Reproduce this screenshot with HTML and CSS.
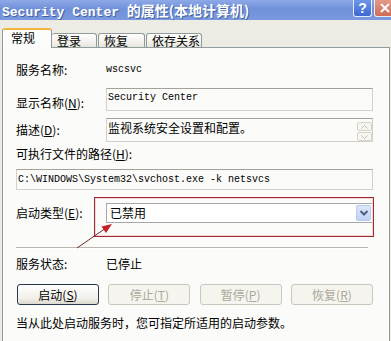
FILE: index.html
```html
<!DOCTYPE html>
<html>
  <head>
    <title>Security Center 的属性</title>
    <meta charset="utf-8">
    <link rel="stylesheet" href="styles.css">
  </head>

  <body>
    <div class="window">

      <div class="titlebar">
        <span class="title"><span class="latin">Security Center </span><span class="cjk">的属性(本地计算机)</span></span>
        <div class="tb-buttons">
          <span class="help">?</span>
          <span class="close">
            <svg width="12" height="12" viewBox="0 0 12 12"><path d="M2 2 L10 10 M10 2 L2 10" stroke="#fff" stroke-width="2"/></svg>
          </span>
        </div>
      </div>

      <div class="tabs">
        <div class="tab active">常规</div>
        <div class="tab t-logon">登录</div>
        <div class="tab t-recover">恢复</div>
        <div class="tab t-deps">依存关系</div>
      </div>

      <div class="panel">

        <div class="row r-name">
          <span class="label">服务名称:</span>
          <span class="mono">wscsvc</span>
        </div>

        <div class="row r-display">
          <span class="label">显示名称(<u>N</u>):</span>
          <div class="field mono">Security Center</div>
        </div>

        <div class="row r-desc">
          <span class="label">描述(<u>D</u>):</span>
          <div class="field area">
            <span class="area-text">监视系统安全设置和配置。</span>
            <div class="spin">
              <span><svg width="7" height="4" viewBox="0 0 7 4"><path d="M0.5 3.5 L3.5 0.5 L6.5 3.5" fill="none" stroke="#c5c3b8"/></svg></span>
              <span><svg width="7" height="4" viewBox="0 0 7 4"><path d="M0.5 0.5 L3.5 3.5 L6.5 0.5" fill="none" stroke="#c5c3b8"/></svg></span>
            </div>
          </div>
        </div>

        <div class="path-label">可执行文件的路径(<u>H</u>):</div>
        <div class="field path mono">C:\WINDOWS\System32\svchost.exe -k netsvcs</div>

        <div class="row r-startup">
          <span class="label">启动类型(<u>E</u>):</span>
          <div class="select">
            <span class="select-text">已禁用</span>
            <span class="drop">
              <svg width="10" height="8" viewBox="0 0 10 8"><path d="M1.5 2 L5 5.5 L8.5 2" fill="none" stroke="#4b5f86" stroke-width="2"/></svg>
            </span>
          </div>
          <div class="highlight"></div>
          <svg class="arrow" width="120" height="60" viewBox="0 0 120 60">
            <line x1="61" y1="51" x2="90" y2="31" stroke="#6e2a2a" stroke-width="1"/>
            <polygon points="96,27 90,36 85.5,29.4" fill="#c41f28"/>
          </svg>
        </div>

        <div class="sep"></div>

        <div class="row r-status">
          <span class="label">服务状态:</span>
          <span>已停止</span>
        </div>

        <div class="buttons">
          <button class="btn">启动(<u>S</u>)</button>
          <button class="btn" disabled>停止(<u>T</u>)</button>
          <button class="btn" disabled>暂停(<u>P</u>)</button>
          <button class="btn" disabled>恢复(<u>R</u>)</button>
        </div>

        <p class="hint">当从此处启动服务时，您可指定所适用的启动参数。</p>

      </div>
    </div>
  </body>
</html>
```

FILE: styles.css
```css
html, body {
  margin: 0;
  height: 100%;
  overflow: hidden;
}

body {
  background: #ecebe4;
  color: #000;
  font-family: "Noto Sans CJK SC", sans-serif;
  font-size: 12px;
  line-height: 16px;
}

u {
  text-decoration: underline;
}

.mono {
  font-family: "Liberation Mono", "Noto Sans CJK SC", monospace;
  font-size: 10px;
}

.window {
  width: 391px;
  height: 341px;
  display: flex;
  flex-direction: column;
  overflow: hidden;
}

/* title bar */
.titlebar {
  height: 20px;
  flex: none;
  display: flex;
  justify-content: space-between;
  background: linear-gradient(#8ea9e6, #7090da 45%, #7b99df);
}

.title {
  padding-left: 2px;
  color: #fff;
  font-weight: bold;
  white-space: nowrap;
  line-height: 20px;
  text-shadow: 1px 1px #41609f;
}

.title .latin {
  font-family: "Liberation Mono", monospace;
  font-size: 13px;
}

.title .cjk {
  font-size: 14px;
}

.tb-buttons {
  display: flex;
  gap: 2px;
  margin-right: -4px;
}

.help,
.close {
  height: 17px;
  border: 1px solid #e4ebfa;
  border-top: none;
  border-radius: 0 0 3px 3px;
  display: flex;
  align-items: center;
  justify-content: center;
  box-sizing: border-box;
}

.help {
  width: 19px;
  background: linear-gradient(#6e95ea, #3d68d2);
  color: #fff;
  font: bold 14px "Liberation Sans", sans-serif;
}

.close {
  width: 21px;
  background: linear-gradient(#e39a88, #cf6c55);
}

/* tabs */
.tabs {
  height: 19px;
  flex: none;
  margin-top: 8px;
  padding-left: 2px;
  display: flex;
  align-items: flex-end;
}

.tab {
  height: 14px;
  box-sizing: border-box;
  padding-left: 5px;
  border: 1px solid #919b9c;
  border-bottom: none;
  border-left: none;
  border-radius: 3px 3px 0 0;
  background: linear-gradient(#ffffff, #f2f1ec 60%, #e6e5de);
  line-height: 13px;
  white-space: nowrap;
}

.tab.active {
  width: 50px;
  height: 20px;
  margin-bottom: -1px;
  padding-left: 8px;
  border-left: 1px solid #919b9c;
  border-top: 2px solid #f3b53f;
  background: #fcfcfa;
  line-height: 16px;
  position: relative;
  z-index: 1;
}

.t-logon { width: 45px; }
.t-recover { width: 47px; margin-left: 1px; border-left: 1px solid #919b9c; }
.t-deps { width: 56px; margin-left: 1px; border-left: 1px solid #919b9c; }

/* panel */
.panel {
  flex: 1;
  margin: 0 1px 0 2px;
  padding: 14px 16px 0 13px;
  border: 1px solid #919b9c;
  border-bottom: none;
  background: #fbfbf9;
}

.row {
  display: flex;
  align-items: flex-start;
}

.label {
  width: 90px;
  flex: none;
  white-space: nowrap;
}

.r-name {
  height: 16px;
}

.field {
  box-sizing: border-box;
  border: 1px solid #d3d1c6;
  border-top-color: #a3a198;
  background: #fbfbf9;
}

.r-display {
  margin-top: 10px;
}

.r-display .label {
  padding-top: 7px;
}

.r-display .field {
  flex: 1;
  height: 23px;
  padding: 2px 0 0 1px;
  line-height: 14px;
}

.r-desc {
  margin-top: 7px;
}

.r-desc .label {
  padding-top: 4px;
}

.area {
  flex: 1;
  height: 24px;
  display: flex;
  padding-left: 1px;
}

.area-text {
  flex: 1;
  padding-top: 1px;
}

.spin {
  display: flex;
  flex-direction: column;
  gap: 1px;
  margin-top: 3px;
}

.spin span {
  width: 15px;
  height: 9px;
  box-sizing: border-box;
  border: 1px solid #d6d4ca;
  border-radius: 2px;
  background: #f6f5f0;
  display: flex;
  align-items: center;
  justify-content: center;
}

.path-label {
  margin-top: 4px;
  height: 16px;
  white-space: nowrap;
}

.path {
  margin-top: 7px;
  height: 21px;
  padding-left: 1px;
  line-height: 19px;
  white-space: nowrap;
}

/* startup type */
.r-startup {
  height: 40px;
  margin-top: 7px;
  position: relative;
}

.r-startup .label {
  padding-top: 8px;
}

.select {
  flex: 1;
  height: 20px;
  margin-top: 6px;
  box-sizing: border-box;
  border: 1px solid #a5a7ab;
  background: #fff;
  display: flex;
  align-items: center;
  padding: 0 1px 0 3px;
}

.select-text {
  flex: 1;
  line-height: 18px;
}

.drop {
  width: 15px;
  height: 16px;
  box-sizing: border-box;
  border: 1px solid #b7c9ef;
  border-radius: 2px;
  background: linear-gradient(#dde6fb, #c2d2f4);
  display: flex;
  align-items: center;
  justify-content: center;
}

.highlight {
  position: absolute;
  left: 78px;
  top: 0;
  width: 280px;
  height: 40px;
  box-sizing: border-box;
  border: 1px solid #9f2b32;
  box-shadow: inset 0 0 0 1px #f4d6d6;
  pointer-events: none;
}

.arrow {
  position: absolute;
  left: 0;
  top: 0;
  overflow: visible;
  pointer-events: none;
}

.sep {
  width: 352px;
  height: 1px;
  margin-top: 10px;
  background: #b9b7ad;
  border-bottom: 1px solid #fff;
}

.r-status {
  height: 16px;
  margin-top: 7px;
}

/* buttons */
.buttons {
  margin-top: 12px;
  margin-left: 1px;
  display: flex;
  justify-content: space-between;
}

.btn {
  width: 82px;
  height: 21px;
  padding: 0;
  border: 1px solid #2b364a;
  border-radius: 3px;
  background: linear-gradient(#ffffff, #f1f0eb 70%, #dcd8ce);
  color: #000;
  font-family: "Noto Sans CJK SC", sans-serif;
  font-size: 12px;
  line-height: 18px;
}

.btn:disabled {
  border-color: #cac8bc;
  background: #f5f4ee;
  color: #aca899;
}

.hint {
  margin: 10px 0 0;
  white-space: nowrap;
}
```
